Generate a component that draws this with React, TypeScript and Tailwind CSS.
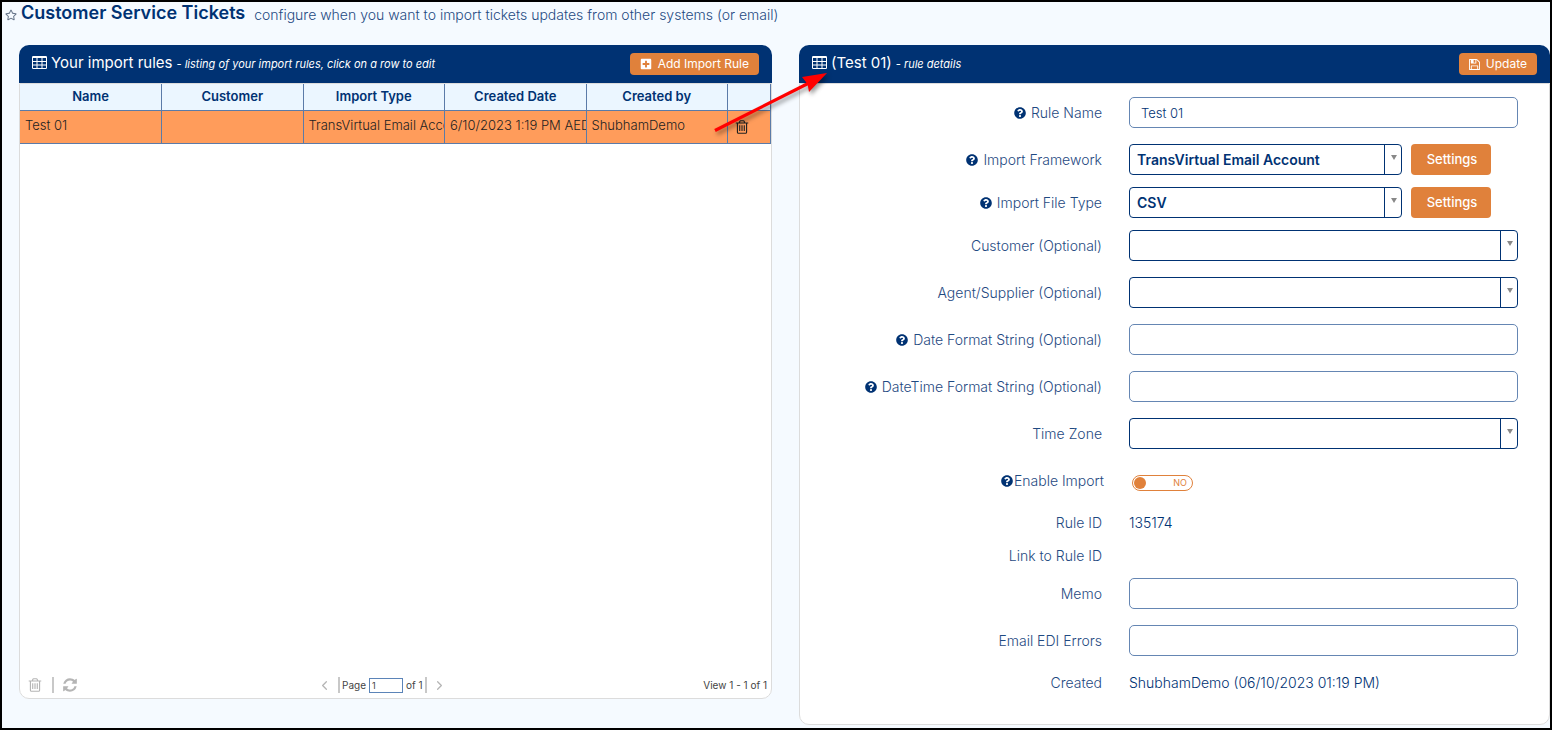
import React, { useState } from "react";
import { ChevronLeft, ChevronRight } from "lucide-react";
import { FaPlusSquare, FaQuestionCircle, FaRegStar } from "react-icons/fa";

interface IconProps {
  className?: string;
}

const TableIcon: React.FC<IconProps> = ({ className }) => (
  <svg viewBox="0 0 15 13" className={className} fill="currentColor" aria-hidden="true">
    <path
      fillRule="evenodd"
      d="M1.200 0h12.600Q15 0 15 1.200v10.600Q15 13 13.800 13H1.200Q0 13 0 11.800V1.200Q0 0 1.200 0zM1 2v3h3.500V2zM5.500 2v3h4V2zM10.500 2v3H14V2zM1 6v2.500h3.500V6zM5.500 6v2.500h4V6zM10.500 6v2.500H14V6zM1 9.500V12h3.500V9.500zM5.500 9.500V12h4V9.500zM10.500 9.500V12H14V9.500z"
    />
  </svg>
);

const TrashIcon: React.FC<IconProps> = ({ className }) => (
  <svg viewBox="0 0 1792 1792" className={className} fill="currentColor" aria-hidden="true">
    <path d="M704 736v576q0 14-9 23t-23 9h-64q-14 0-23-9t-9-23v-576q0-14 9-23t23-9h64q14 0 23 9t9 23zm256 0v576q0 14-9 23t-23 9h-64q-14 0-23-9t-9-23v-576q0-14 9-23t23-9h64q14 0 23 9t9 23zm256 0v576q0 14-9 23t-23 9h-64q-14 0-23-9t-9-23v-576q0-14 9-23t23-9h64q14 0 23 9t9 23zm128 724v-948h-896v948q0 22 7 40.5t14.5 27 10.5 8.5h832q3 0 10.500-8.500t14.500-27 7-40.500zm-672-1076h448l-48-117q-7-9-17-11h-317q-10 2-17 11zm928 32v64q0 14-9 23t-23 9h-96v948q0 83-47 143.500t-113 60.500h-832q-66 0-113-58.500t-47-141.500v-952h-96q-14 0-23-9t-9-23v-64q0-14 9-23t23-9h309l70-167q15-37 54-63t79-26h320q40 0 79 26t54 63l70 167h309q14 0 23 9t9 23z" />
  </svg>
);

const RefreshIcon: React.FC<IconProps> = ({ className }) => (
  <svg viewBox="0 0 1792 1792" className={className} fill="currentColor" aria-hidden="true">
    <path d="M1639 1056q0 5-1 7-64 268-268 434.500t-478 166.500q-146 0-282.500-55t-243.500-157l-129 129q-19 19-45 19t-45-19-19-45v-448q0-26 19-45t45-19h448q26 0 45 19t19 45-19 45l-137 137q71 66 161 102t187 36q134 0 250-65t186-179q11-17 53-117 8-23 30-23h192q13 0 22.500 9.500t9.500 22.500zm25-800v448q0 26-19 45t-45 19h-448q-26 0-45-19t-19-45 19-45l138-138q-148-137-349-137-134 0-250 65t-186 179q-11 17-53 117-8 23-30 23h-199q-13 0-22.500-9.500t-9.500-22.500v-7q65-268 270-434.500t480-166.500q146 0 284 55.500t245 156.500l130-129q19-19 45-19t45 19 19 45z" />
  </svg>
);

const SaveIcon: React.FC<IconProps> = ({ className }) => (
  <svg viewBox="128 128 1536 1536" className={className} fill="currentColor" aria-hidden="true">
    <path d="M512 1536h768v-384h-768v384zm896 0h128v-896q0-14-10-38.500t-20-34.500l-281-281q-10-10-34-20t-39-10v416q0 40-28 68t-68 28h-576q-40 0-68-28t-28-68v-416h-128v1280h128v-416q0-40 28-68t68-28h832q40 0 68 28t28 68v416zm-384-928v-320q0-13-9.500-22.500t-22.500-9.500h-192q-13 0-22.500 9.500t-9.500 22.500v320q0 13 9.500 22.500t22.500 9.500h192q13 0 22.500-9.500t9.500-22.500zm640 32v928q0 40-28 68t-68 28h-1344q-40 0-68-28t-28-68v-1344q0-40 28-68t68-28h928q40 0 88 20t76 48l280 280q28 28 48 76t20 88z" />
  </svg>
);

interface PanelHeaderProps {
  title: string;
  note: string;
  children: React.ReactNode;
}

const PanelHeader: React.FC<PanelHeaderProps> = ({ title, note, children }) => (
  <div className="flex h-[38px] shrink-0 items-center justify-between rounded-t-[10px] bg-[#003273] pr-[13px] pl-[13px] text-white">
    <div className="flex items-center pb-[2px] whitespace-nowrap">
      <TableIcon className="mr-1 mb-[2px] h-[13px] w-[15px]" />
      <h2 className="text-[15px] leading-5">{title}</h2>
      <span className="mt-[2px] ml-1 text-[11px] leading-5 italic">- {note}</span>
    </div>
    {children}
  </div>
);

interface FieldRowProps {
  label: string;
  htmlFor?: string;
  help?: boolean;
  size?: "control" | "text";
  tight?: boolean;
  snug?: boolean;
  children?: React.ReactNode;
}

const FieldRow: React.FC<FieldRowProps> = ({
  label,
  htmlFor,
  help,
  size = "control",
  tight,
  snug,
  children,
}) => (
  <div
    className={`grid grid-cols-[302px_1fr] items-center gap-[27px] ${
      size === "control" ? "h-[31px]" : "h-[21px] pb-[3px]"
    } ${tight ? "mb-3" : "mb-4"}`}
  >
    <label
      htmlFor={htmlFor}
      className={`flex items-center justify-end pt-px text-sm font-light whitespace-nowrap text-[#1f4a82] ${
        snug ? "-mr-[2px] gap-px" : "gap-[5px]"
      }`}
    >
      {help && <FaQuestionCircle size={12} className="text-[#003273]" />}
      {label}
    </label>
    <div className="flex min-w-0 items-center gap-[9px]">{children}</div>
  </div>
);

const TextField: React.FC<{ id: string; defaultValue?: string }> = ({ id, defaultValue }) => (
  <input
    id={id}
    type="text"
    defaultValue={defaultValue}
    className="h-[31px] w-full rounded-[5px] border border-[#6586b3] bg-white px-[11px] text-[13px] font-light text-[#003273] outline-none"
  />
);

const SelectField: React.FC<{ id: string; options?: string[]; narrow?: boolean }> = ({
  id,
  options = [""],
  narrow,
}) => (
  <div className={`relative h-[31px] ${narrow ? "w-[273px]" : "w-full"}`}>
    <select
      id={id}
      className="h-full w-full appearance-none rounded-[4px] border border-[#003273] bg-white pr-5 pl-[7px] text-sm font-semibold text-[#003273] outline-none"
    >
      {options.map((option) => (
        <option key={option}>{option}</option>
      ))}
    </select>
    <span className="pointer-events-none absolute inset-y-0 right-0 flex w-[18px] justify-center border-l border-[#003273] pt-[11px]">
      <svg viewBox="0 0 6 5" className="h-[5px] w-[6px]" aria-hidden="true">
        <path d="M0 0h6L3 5z" fill="#888" />
      </svg>
    </span>
  </div>
);

const SettingsButton: React.FC = () => (
  <button type="button" className="h-[31px] w-20 rounded-[4px] bg-[#e0813b] pl-[2px] text-[13px] font-medium text-white">
    Settings
  </button>
);

const columns = ["Name", "Customer", "Import Type", "Created Date", "Created by"];

const rules = [["Test 01", "", "TransVirtual Email Account", "6/10/2023 1:19 PM AEDT", "ShubhamDemo"]];

const RulesPanel: React.FC = () => (
  <section className="mb-[29px] flex min-w-0 flex-col rounded-[10px] bg-white">
    <PanelHeader title="Your import rules" note="listing of your import rules, click on a row to edit">
      <button
        type="button"
        className="flex h-[22px] items-center gap-[6px] rounded-[4px] bg-[#e0813b] px-[10px] text-xs whitespace-nowrap"
      >
        <FaPlusSquare size={12} />
        Add Import Rule
      </button>
    </PanelHeader>
    <div className="flex flex-1 flex-col rounded-b-[10px] border border-[#dcdcdc]">
      <table className="w-full table-fixed border-collapse text-[13px]">
        <thead>
          <tr className="h-[26px] border-b border-[#5b7ba8] bg-[#ebf6ff] text-[#003273]">
            {columns.map((column) => (
              <th key={column} className="border-r border-[#5b7ba8] font-semibold">
                {column}
              </th>
            ))}
            <th className="w-[43px] border-r border-[#5b7ba8]" aria-label="Delete" />
          </tr>
        </thead>
        <tbody>
          {rules.map((rule) => (
            <tr key={rule[0]} className="h-[33px] border-b border-[#5b7ba8] bg-[#ff9c5b] font-light text-[#222]">
              {rule.map((cell, i) => (
                <td key={columns[i]} className="overflow-hidden border-r border-[#5b7ba8] pb-[2px] pl-[5px] whitespace-nowrap">
                  {cell}
                </td>
              ))}
              <td className="border-r border-[#5b7ba8] pl-[6px]">
                <button type="button" aria-label="Delete rule" className="block">
                  <TrashIcon className="size-4" />
                </button>
              </td>
            </tr>
          ))}
        </tbody>
      </table>
      <div className="mt-auto grid h-[26px] grid-cols-[297px_auto_1fr] items-center text-[10px] text-[#444]">
        <div className="flex items-center pl-[7px] text-[#b5b5b5]">
          <button type="button" aria-label="Delete selected">
            <TrashIcon className="size-4" />
          </button>
          <span className="mr-[8px] ml-[9px] h-4 w-[2px] bg-[#c8c8c8]" />
          <button type="button" aria-label="Reload">
            <RefreshIcon className="size-4" />
          </button>
        </div>
        <div className="flex items-center">
          <button type="button" aria-label="Previous page" className="mr-[6px] text-[#b5b5b5]">
            <ChevronLeft size={15} />
          </button>
          <span className="mr-[2px] h-4 w-[2px] bg-[#c8c8c8]" />
          <label htmlFor="page">Page</label>
          <input
            id="page"
            type="text"
            defaultValue="1"
            className="mx-[3px] h-[15px] w-[34px] border border-[#5b84b8] px-[2px] text-[9px] outline-none"
          />
          <span>of 1</span>
          <span className="mr-[5px] ml-[2px] h-4 w-[2px] bg-[#c8c8c8]" />
          <button type="button" aria-label="Next page" className="text-[#b5b5b5]">
            <ChevronRight size={15} />
          </button>
        </div>
        <div className="pr-1 text-right">View 1 - 1 of 1</div>
      </div>
    </div>
  </section>
);

const DetailsPanel: React.FC = () => {
  const [enabled, setEnabled] = useState(false);

  return (
    <section className="relative mb-[3px] flex min-w-0 flex-col rounded-[10px] bg-white">
      <PanelHeader title="(Test 01)" note="rule details">
        <button
          type="button"
          className="flex h-[22px] items-center gap-[6px] rounded-[4px] bg-[#e0813b] px-[10px] text-xs"
        >
          <SaveIcon className="size-[11px]" />
          Update
        </button>
      </PanelHeader>

      <form className="flex-1 rounded-b-[10px] border border-[#dcdcdc] pt-[13px] pr-[31px] pb-[14px] text-sm font-light text-[#003273]">
        <FieldRow label="Rule Name" htmlFor="rule-name" help>
          <TextField id="rule-name" defaultValue="Test 01" />
        </FieldRow>
        <FieldRow label="Import Framework" htmlFor="framework" help tight>
          <SelectField id="framework" options={["TransVirtual Email Account"]} narrow />
          <SettingsButton />
        </FieldRow>
        <FieldRow label="Import File Type" htmlFor="file-type" help tight>
          <SelectField id="file-type" options={["CSV"]} narrow />
          <SettingsButton />
        </FieldRow>
        <FieldRow label="Customer (Optional)" htmlFor="customer">
          <SelectField id="customer" />
        </FieldRow>
        <FieldRow label="Agent/Supplier (Optional)" htmlFor="agent">
          <SelectField id="agent" />
        </FieldRow>
        <FieldRow label="Date Format String (Optional)" htmlFor="date-format" help>
          <TextField id="date-format" />
        </FieldRow>
        <FieldRow label="DateTime Format String (Optional)" htmlFor="datetime-format" help>
          <TextField id="datetime-format" />
        </FieldRow>
        <FieldRow label="Time Zone" htmlFor="time-zone">
          <SelectField id="time-zone" />
        </FieldRow>
        <FieldRow label="Enable Import" htmlFor="enable-import" help snug>
          <span className="relative mt-1 ml-[3px] flex h-4 w-[61px] items-center rounded-full border border-[#e0813b] px-px">
            <input
              id="enable-import"
              type="checkbox"
              checked={enabled}
              onChange={(e) => setEnabled(e.target.checked)}
              className="absolute inset-0 cursor-pointer appearance-none"
            />
            <span className={`pointer-events-none size-3 rounded-full bg-[#e0813b] ${enabled ? "order-2" : ""}`} />
            <span className="pointer-events-none flex-1 pt-[2px] pr-1 text-right text-[9px] font-normal text-[#e0813b]">
              {enabled ? "YES" : "NO"}
            </span>
          </span>
        </FieldRow>
        <FieldRow label="Rule ID" size="text" tight>
          135174
        </FieldRow>
        <FieldRow label="Link to Rule ID" size="text" tight />
        <FieldRow label="Memo" htmlFor="memo">
          <TextField id="memo" />
        </FieldRow>
        <FieldRow label="Email EDI Errors" htmlFor="email-errors">
          <TextField id="email-errors" />
        </FieldRow>
        <FieldRow label="Created" size="text">
          ShubhamDemo (06/10/2023 01:19 PM)
        </FieldRow>
      </form>

      {/* Callout arrow from the selected row to the details title */}
      <svg
        viewBox="0 0 124 70"
        className="pointer-events-none absolute top-[23px] -left-[88px] h-[70px] w-[124px] drop-shadow-[2px_3px_2px_rgba(0,0,0,0.4)]"
        aria-hidden="true"
      >
        <path d="M4 62.500L98 15" stroke="#f00" strokeWidth="3.200" fill="none" />
        <path d="M116 5L91 9l5.500 7 1.500 8z" fill="#f00" />
      </svg>
    </section>
  );
};

export default function App() {
  return (
    <div className="flex min-h-screen flex-col border-2 border-black bg-[#f5faff] font-['Inter',sans-serif]">
      <header className="flex h-[43px] items-start pl-[3px]">
        <button type="button" aria-label="Add to favourites" className="mt-[7px] mr-1 text-[#66758a]">
          <FaRegStar size={12} />
        </button>
        <h1 className="text-lg leading-[22px] font-semibold whitespace-nowrap text-[#003273]">
          Customer Service Tickets
        </h1>
        <p className="mt-[3px] ml-[9px] text-sm leading-5 font-light whitespace-nowrap text-[#1f4a82]">
          configure when you want to import tickets updates from other systems (or email)
        </p>
      </header>
      <main className="grid flex-1 grid-cols-[753fr_751fr] gap-[27px] pl-[17px]">
        <RulesPanel />
        <DetailsPanel />
      </main>
    </div>
  );
}
